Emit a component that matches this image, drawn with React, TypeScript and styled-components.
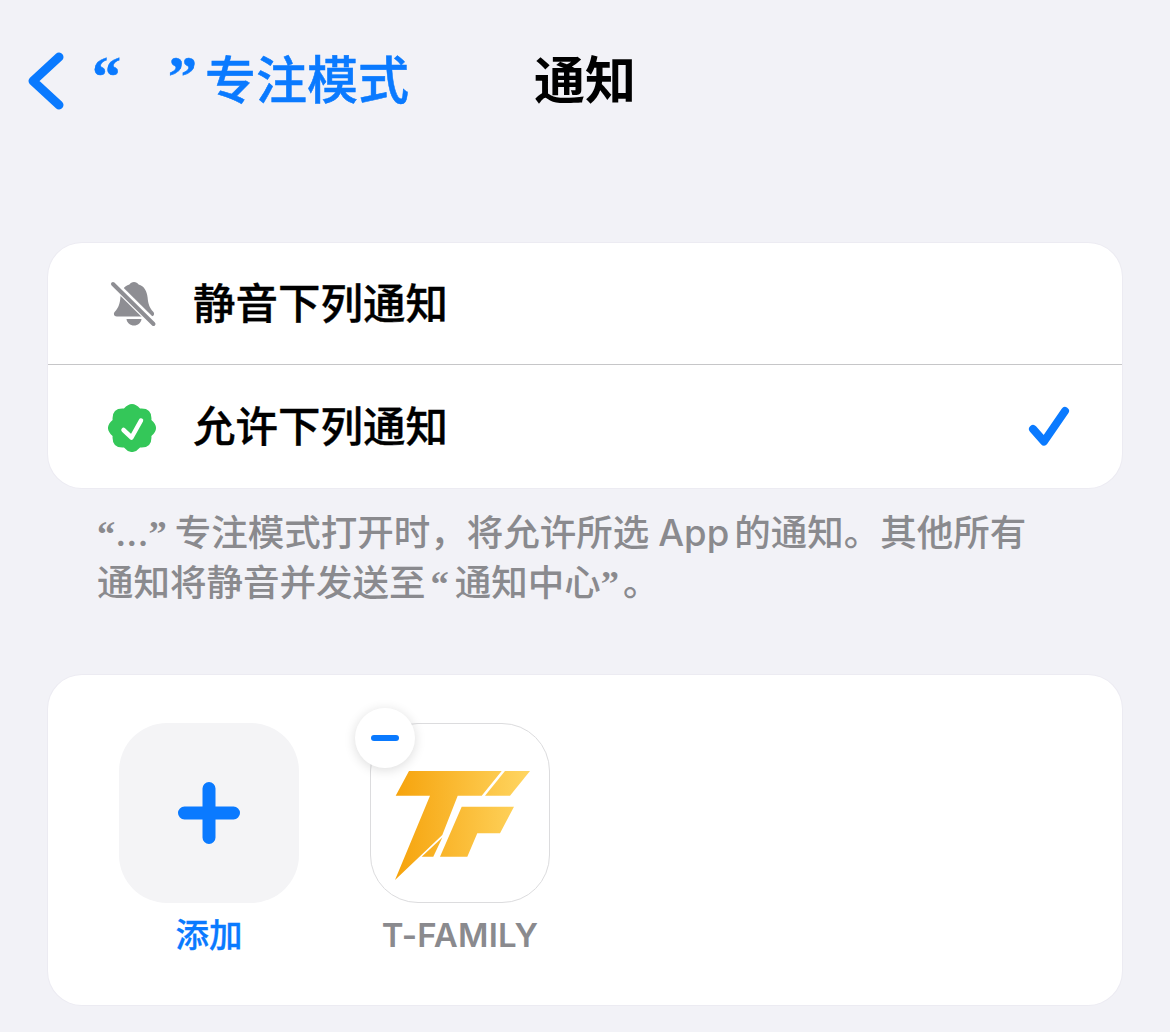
import React from 'react';
import styled, { createGlobalStyle } from 'styled-components';

const BLUE = '#0a7aff';
const GRAY = '#8a8a8e';

const GlobalStyle = createGlobalStyle`
  html, body {
    margin: 0;
    padding: 0;
    background: #f2f2f7;
  }
  body {
    font-family: "Inter", "Noto Sans CJK SC", sans-serif;
  }
`;

const Page = styled.div`
  width: 1170px;
  height: 1032px;
  overflow: hidden;
  background: #f2f2f7;
`;

const Nav = styled.div`
  height: 162px;
  padding-left: 28px;
  display: flex;
  align-items: center;
  gap: 125px;
`;

const Back = styled.div`
  display: flex;
  align-items: center;
  color: ${BLUE};
  font-size: 51px;
  font-weight: 500;
  -webkit-text-stroke: 0.5px ${BLUE};
  line-height: 60px;
`;

const BackIcon = styled.svg`
  width: 38px;
  height: 60px;
  margin-right: 26px;
  flex: none;
`;

const Quote = styled.span<{ $before?: number; $after?: number }>`
  font-family: "Liberation Serif", serif;
  font-weight: 700;
  line-height: 0;
  margin-left: ${(p) => p.$before ?? 0}px;
  margin-right: ${(p) => p.$after ?? 0}px;
`;

const NavQuote = styled(Quote)`
  font-size: 58px;
  line-height: 60px;
  margin-bottom: 8px;
`;

const Hidden = styled.span`
  display: inline-block;
  width: 47px;
`;

const Title = styled.div`
  color: #000;
  font-size: 51px;
  font-weight: 700;
  line-height: 60px;
`;

const Content = styled.div`
  padding: 81px 48px 0;
`;

const Card = styled.div`
  background: #fff;
  border-radius: 34px;
  box-shadow: 0 0 0 1px #ecebf2;
`;

const Row = styled.div`
  height: 121px;
  padding: 0 52px 0 60px;
  display: flex;
  align-items: center;
  & + & {
    border-top: 1px solid #c6c6c8;
    height: 123px;
  }
`;

const RowIcon = styled.svg`
  width: 50px;
  height: 50px;
  margin-right: 35px;
  flex: none;
`;

const RowLabel = styled.div`
  flex: 1;
  color: #000;
  font-size: 42.5px;
  font-weight: 500;
  -webkit-text-stroke: 0.35px #000;
  line-height: 50px;
`;

const Tick = styled.svg`
  width: 42px;
  height: 42px;
  flex: none;
`;

const Footnote = styled.p`
  margin: 0;
  padding: 20px 49px 67px;
  color: ${GRAY};
  font-size: 36.5px;
  font-weight: 500;
  line-height: 50px;
`;

const AppWord = styled.span`
  margin: 0 5px 0 9px;
`;

const AppGrid = styled.div`
  height: 330px;
  box-sizing: border-box;
  padding: 48px 71px 0;
  display: flex;
  gap: 71px;
`;

const AppItem = styled.div`
  width: 180px;
  display: flex;
  flex-direction: column;
  align-items: center;
`;

const Tile = styled.div<{ $outlined?: boolean }>`
  position: relative;
  width: 180px;
  height: 180px;
  box-sizing: border-box;
  border-radius: 48px;
  display: flex;
  align-items: center;
  justify-content: center;
  background: ${(p) => (p.$outlined ? '#fff' : '#f4f4f6')};
  border: ${(p) => (p.$outlined ? '1px solid #dcdcde' : 'none')};
`;

const PlusIcon = styled.svg`
  width: 64px;
  height: 64px;
`;

const LogoIcon = styled.svg`
  position: absolute;
  left: -1px;
  top: -1px;
  width: 180px;
  height: 180px;
`;

const RemoveBadge = styled.div`
  position: absolute;
  left: -16px;
  top: -16px;
  width: 60px;
  height: 60px;
  border-radius: 50%;
  background: #fff;
  box-shadow: 0 2px 12px rgba(0, 0, 0, 0.14);
  display: flex;
  align-items: center;
  justify-content: center;
`;

const MinusBar = styled.div`
  width: 28px;
  height: 6px;
  border-radius: 3px;
  background: ${BLUE};
`;

const AppName = styled.div<{ $blue?: boolean }>`
  margin-top: 12px;
  color: ${(p) => (p.$blue ? BLUE : GRAY)};
  font-size: ${(p) => (p.$blue ? 33.5 : 33)}px;
  font-weight: ${(p) => (p.$blue ? 500 : 600)};
  -webkit-text-stroke: ${(p) => (p.$blue ? `0.3px ${BLUE}` : '0')};
  letter-spacing: ${(p) => (p.$blue ? 0 : 0.2)}px;
  line-height: 40px;
  white-space: nowrap;
`;

// scalloped badge outline, lobes alternating between two radii
const badgePath = (lobes: number, outer: number, inner: number, cx: number, cy: number) => {
  const at = (r: number, a: number) =>
    `${(cx + r * Math.sin(a)).toFixed(2)} ${(cy - r * Math.cos(a)).toFixed(2)}`;
  const step = (Math.PI * 2) / lobes;
  let d = `M${at(inner, -step / 2)}`;
  for (let i = 0; i < lobes; i++) {
    d += ` Q${at(outer, i * step)} ${at(inner, i * step + step / 2)}`;
  }
  return d + 'Z';
};

const BellSlash = () => (
  <RowIcon viewBox="0 0 50 50">
    <path
      fill="#8e8e93"
      d="M26 3c2 0 3.600 1 4.600 2.600 5.600 1.700 8.300 6.400 9 13 .6 6 1.600 10 5.600 14.200 1.800 2 .8 4.700-2 4.700H8.800c-2.800 0-3.800-2.700-2-4.700 4-4.200 5-8.200 5.600-14.200.7-6.600 3.400-11.300 9-13 1-1.600 2.600-2.600 4.600-2.600z"
    />
    <path fill="#8e8e93" d="M18.500 40h15c-.5 4-3.700 6.500-7.500 6.500s-7-2.500-7.500-6.500z" />
    <path d="M3 2 47 45.500" stroke="#fff" strokeWidth="8" />
    <path d="M5 5 45.500 45" stroke="#8e8e93" strokeWidth="4" strokeLinecap="round" />
  </RowIcon>
);

const GreenBadge = () => (
  <RowIcon viewBox="0 0 50 50">
    <path fill="#34c759" d={badgePath(8, 28.7, 21, 24, 26)} />
    <path
      d="M15.500 28 23.500 35.500 33 18.500"
      fill="none"
      stroke="#fff"
      strokeWidth="4.500"
      strokeLinecap="round"
      strokeLinejoin="round"
    />
  </RowIcon>
);

const TFamilyLogo = () => (
  <LogoIcon viewBox="0 0 180 180">
    <defs>
      <linearGradient id="tf" gradientUnits="userSpaceOnUse" x1="25" y1="100" x2="160" y2="100">
        <stop offset="0" stopColor="#f6a30c" />
        <stop offset="1" stopColor="#ffd662" />
      </linearGradient>
    </defs>
    <g fill="url(#tf)">
      <polygon points="39,48 131.700,48 111.700,72.700 87.700,72.700 72.300,112 25,157 60,72.700 25.700,72.700" />
      <polygon points="72.300,114.500 63.300,133.700 51.700,133.700" />
      <polygon points="135,48 160,48 140,72.700 115,72.700" />
      <polygon points="91.700,83.700 144,83.700 130,110.300 107.300,110.300 97.300,133.700 70,133.700" />
    </g>
  </LogoIcon>
);

export default function App() {
  return (
    <Page>
      <GlobalStyle />
      <Nav>
        <Back>
          <BackIcon viewBox="0 0 38 60">
            <path
              d="M31 6 5 30l26 24"
              fill="none"
              stroke={BLUE}
              strokeWidth="9"
              strokeLinecap="round"
              strokeLinejoin="round"
            />
          </BackIcon>
          <NavQuote>“</NavQuote>
          <Hidden />
          <NavQuote $after={8}>”</NavQuote>
          专注模式
        </Back>
        <Title>通知</Title>
      </Nav>
      <Content>
        <Card>
          <Row>
            <BellSlash />
            <RowLabel>静音下列通知</RowLabel>
          </Row>
          <Row>
            <GreenBadge />
            <RowLabel>允许下列通知</RowLabel>
            <Tick viewBox="0 0 42 42">
              <path
                d="M5 23 16 35.500 37 5"
                fill="none"
                stroke={BLUE}
                strokeWidth="8"
                strokeLinecap="round"
                strokeLinejoin="round"
              />
            </Tick>
          </Row>
        </Card>
        <Footnote>
          <Quote>“</Quote>...<Quote $after={8}>”</Quote>专注模式打开时，将允许所选<AppWord>App</AppWord>的通知。其他所有
          <br />
          通知将静音并发送至<Quote $before={5} $after={6}>“</Quote>通知中心<Quote $after={4}>”</Quote>。
        </Footnote>
        <Card>
          <AppGrid>
            <AppItem>
              <Tile>
                <PlusIcon viewBox="0 0 64 64">
                  <path d="M32 7.500v49M7.500 32h49" stroke={BLUE} strokeWidth="13" strokeLinecap="round" />
                </PlusIcon>
              </Tile>
              <AppName $blue>添加</AppName>
            </AppItem>
            <AppItem>
              <Tile $outlined>
                <TFamilyLogo />
                <RemoveBadge>
                  <MinusBar />
                </RemoveBadge>
              </Tile>
              <AppName>T-FAMILY</AppName>
            </AppItem>
          </AppGrid>
        </Card>
      </Content>
    </Page>
  );
}
